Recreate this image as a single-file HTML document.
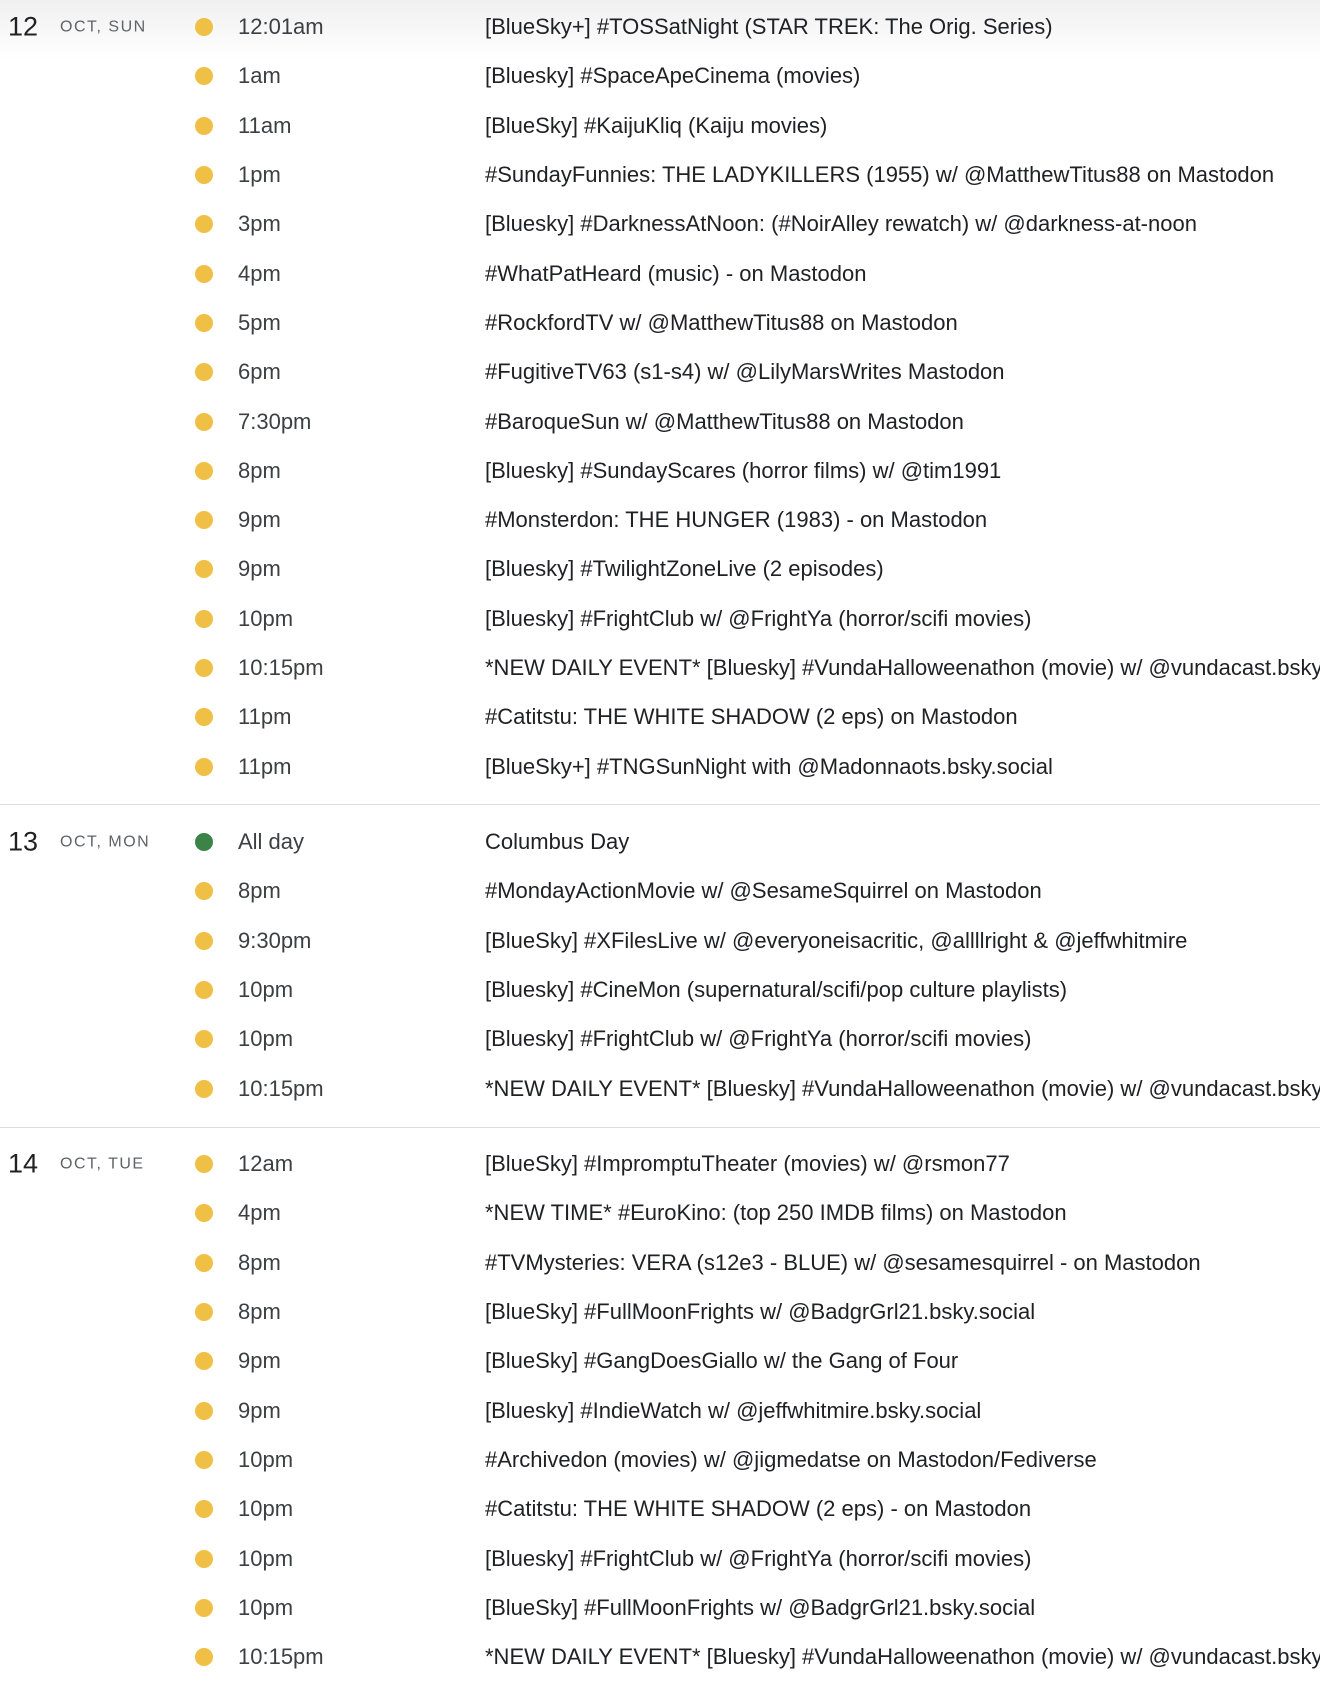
<!DOCTYPE html>
<html><head><meta charset="utf-8"><style>
html,body{margin:0;padding:0;background:#fff;}
body{width:1320px;height:1674px;position:relative;overflow:hidden;font-family:"Liberation Sans",Arial,sans-serif;color:#202124;}
.shade{position:absolute;left:0;top:0;width:1320px;height:60px;background:linear-gradient(#f0f0f0,#ffffff);}
.sec{position:absolute;left:0;width:1320px;}
.row{height:49.3px;position:relative;}
.num{position:absolute;left:8px;top:50%;transform:translateY(-50%);font-size:27px;color:#202124;}
.lbl{position:absolute;left:60px;top:50%;transform:translateY(-46%);font-size:16px;letter-spacing:1.5px;color:#5f6368;}
.dot{position:absolute;left:195px;top:50%;margin-top:-9px;width:18px;height:18px;border-radius:50%;background:#f0bf45;}
.g{background:#3b8347;}
.t{position:absolute;left:238px;top:50%;transform:translateY(-50%);font-size:22px;color:#3c4043;white-space:nowrap;}
.e{position:absolute;left:485px;top:50%;transform:translateY(-50%);font-size:22px;color:#202124;white-space:nowrap;}
.hr{position:absolute;left:0;width:1320px;height:1px;background:#dadce0;}
</style></head><body>
<div class="shade"></div>
<div class="sec" style="top:2.5px">
<div class="row"><span class="num">12</span><span class="lbl">OCT, SUN</span><span class="dot"></span><span class="t">12:01am</span><span class="e">[BlueSky+] #TOSSatNight (STAR TREK: The Orig. Series)</span></div>
<div class="row"><span class="dot"></span><span class="t">1am</span><span class="e">[Bluesky] #SpaceApeCinema (movies)</span></div>
<div class="row"><span class="dot"></span><span class="t">11am</span><span class="e">[BlueSky] #KaijuKliq (Kaiju movies)</span></div>
<div class="row"><span class="dot"></span><span class="t">1pm</span><span class="e">#SundayFunnies: THE LADYKILLERS (1955) w/ @MatthewTitus88 on Mastodon</span></div>
<div class="row"><span class="dot"></span><span class="t">3pm</span><span class="e">[Bluesky] #DarknessAtNoon: (#NoirAlley rewatch) w/ @darkness-at-noon</span></div>
<div class="row"><span class="dot"></span><span class="t">4pm</span><span class="e">#WhatPatHeard (music) - on Mastodon</span></div>
<div class="row"><span class="dot"></span><span class="t">5pm</span><span class="e">#RockfordTV w/ @MatthewTitus88 on Mastodon</span></div>
<div class="row"><span class="dot"></span><span class="t">6pm</span><span class="e">#FugitiveTV63 (s1-s4) w/ @LilyMarsWrites Mastodon</span></div>
<div class="row"><span class="dot"></span><span class="t">7:30pm</span><span class="e">#BaroqueSun w/ @MatthewTitus88 on Mastodon</span></div>
<div class="row"><span class="dot"></span><span class="t">8pm</span><span class="e">[Bluesky] #SundayScares (horror films) w/ @tim1991</span></div>
<div class="row"><span class="dot"></span><span class="t">9pm</span><span class="e">#Monsterdon: THE HUNGER (1983) - on Mastodon</span></div>
<div class="row"><span class="dot"></span><span class="t">9pm</span><span class="e">[Bluesky] #TwilightZoneLive (2 episodes)</span></div>
<div class="row"><span class="dot"></span><span class="t">10pm</span><span class="e">[Bluesky] #FrightClub w/ @FrightYa (horror/scifi movies)</span></div>
<div class="row"><span class="dot"></span><span class="t">10:15pm</span><span class="e">*NEW DAILY EVENT* [Bluesky] #VundaHalloweenathon (movie) w/ @vundacast.bsky.social</span></div>
<div class="row"><span class="dot"></span><span class="t">11pm</span><span class="e">#Catitstu: THE WHITE SHADOW (2 eps) on Mastodon</span></div>
<div class="row"><span class="dot"></span><span class="t">11pm</span><span class="e">[BlueSky+] #TNGSunNight with @Madonnaots.bsky.social</span></div>
</div>
<div class="hr" style="top:804px"></div>
<div class="sec" style="top:817.5px">
<div class="row"><span class="num">13</span><span class="lbl">OCT, MON</span><span class="dot g"></span><span class="t">All day</span><span class="e">Columbus Day</span></div>
<div class="row"><span class="dot"></span><span class="t">8pm</span><span class="e">#MondayActionMovie w/ @SesameSquirrel on Mastodon</span></div>
<div class="row"><span class="dot"></span><span class="t">9:30pm</span><span class="e">[BlueSky] #XFilesLive w/ @everyoneisacritic, @allllright &amp; @jeffwhitmire</span></div>
<div class="row"><span class="dot"></span><span class="t">10pm</span><span class="e">[Bluesky] #CineMon (supernatural/scifi/pop culture playlists)</span></div>
<div class="row"><span class="dot"></span><span class="t">10pm</span><span class="e">[Bluesky] #FrightClub w/ @FrightYa (horror/scifi movies)</span></div>
<div class="row"><span class="dot"></span><span class="t">10:15pm</span><span class="e">*NEW DAILY EVENT* [Bluesky] #VundaHalloweenathon (movie) w/ @vundacast.bsky.social</span></div>
</div>
<div class="hr" style="top:1127px"></div>
<div class="sec" style="top:1139.5px">
<div class="row"><span class="num">14</span><span class="lbl">OCT, TUE</span><span class="dot"></span><span class="t">12am</span><span class="e">[BlueSky] #ImpromptuTheater (movies) w/ @rsmon77</span></div>
<div class="row"><span class="dot"></span><span class="t">4pm</span><span class="e">*NEW TIME* #EuroKino: (top 250 IMDB films) on Mastodon</span></div>
<div class="row"><span class="dot"></span><span class="t">8pm</span><span class="e">#TVMysteries: VERA (s12e3 - BLUE) w/ @sesamesquirrel - on Mastodon</span></div>
<div class="row"><span class="dot"></span><span class="t">8pm</span><span class="e">[BlueSky] #FullMoonFrights w/ @BadgrGrl21.bsky.social</span></div>
<div class="row"><span class="dot"></span><span class="t">9pm</span><span class="e">[BlueSky] #GangDoesGiallo w/ the Gang of Four</span></div>
<div class="row"><span class="dot"></span><span class="t">9pm</span><span class="e">[Bluesky] #IndieWatch w/ @jeffwhitmire.bsky.social</span></div>
<div class="row"><span class="dot"></span><span class="t">10pm</span><span class="e">#Archivedon (movies) w/ @jigmedatse on Mastodon/Fediverse</span></div>
<div class="row"><span class="dot"></span><span class="t">10pm</span><span class="e">#Catitstu: THE WHITE SHADOW (2 eps) - on Mastodon</span></div>
<div class="row"><span class="dot"></span><span class="t">10pm</span><span class="e">[Bluesky] #FrightClub w/ @FrightYa (horror/scifi movies)</span></div>
<div class="row"><span class="dot"></span><span class="t">10pm</span><span class="e">[BlueSky] #FullMoonFrights w/ @BadgrGrl21.bsky.social</span></div>
<div class="row"><span class="dot"></span><span class="t">10:15pm</span><span class="e">*NEW DAILY EVENT* [Bluesky] #VundaHalloweenathon (movie) w/ @vundacast.bsky.social</span></div>
</div>
</body></html>
